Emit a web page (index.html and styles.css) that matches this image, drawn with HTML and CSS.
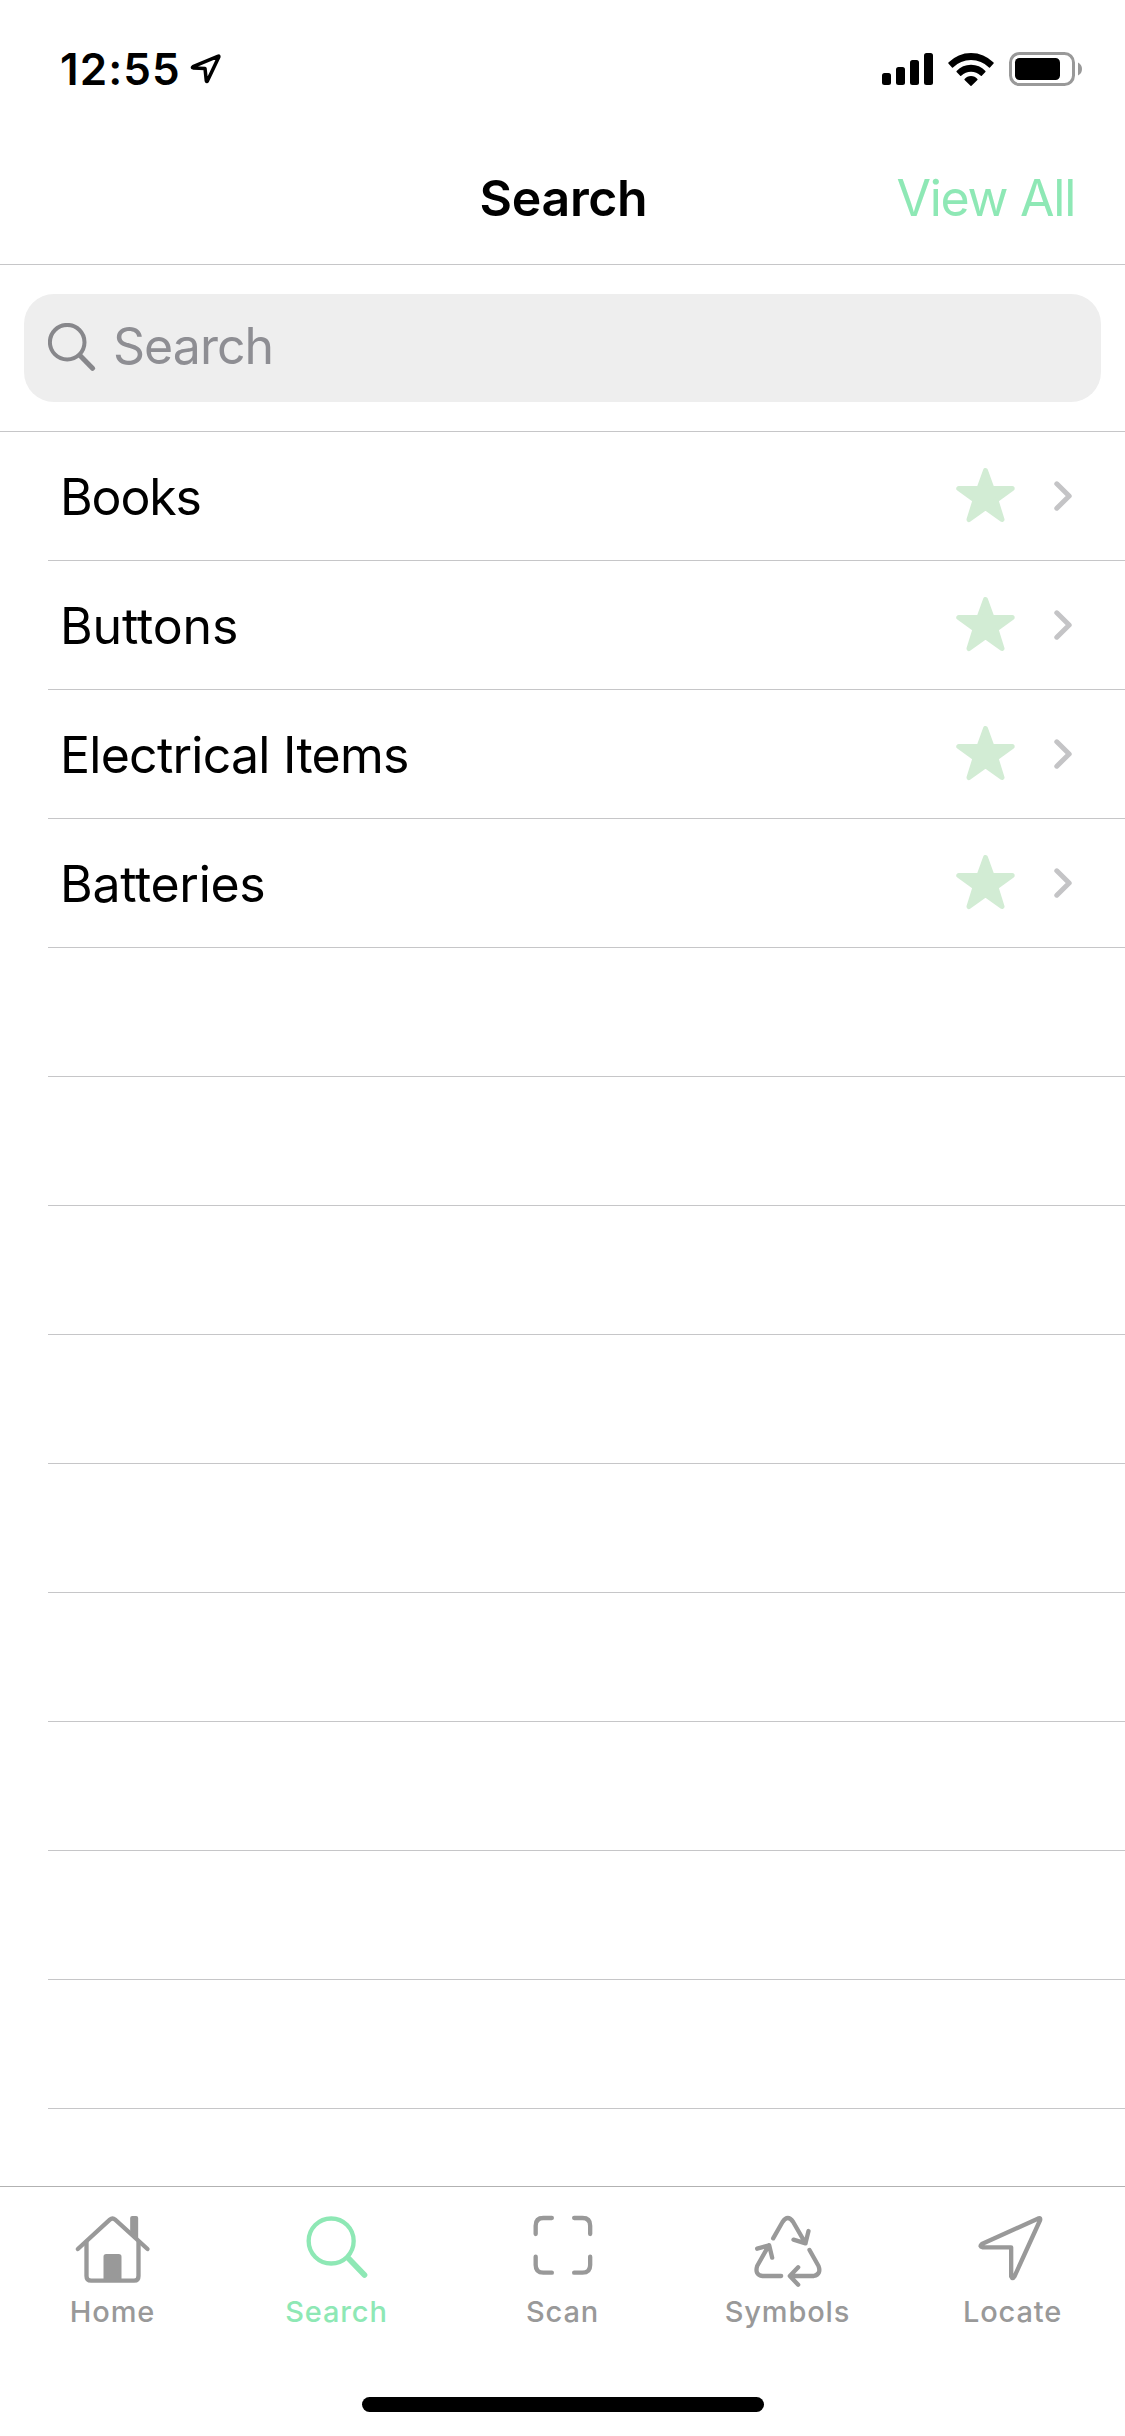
FILE: index.html
```
<!DOCTYPE html>
<html lang="en">
<head>
<meta charset="utf-8">
<title>Search</title>
<link rel="stylesheet" href="styles.css">
</head>
<body>
<div class="screen">
  <div class="status">
    <span class="time">12:55</span>
    <svg class="location" viewBox="0 0 34 34"><path d="M29.3 4.2 4 14.7q-1.300.8.2 1.200L16 16.400 17.300 28.700q.4 1.500 1.200.1L29.800 5q.3-1.200-.5-.8Z"/></svg>
    <svg class="signal" viewBox="0 0 51 32"><rect x="0" y="20" width="9" height="12" rx="2.500"/><rect x="14" y="14" width="9" height="18" rx="2.500"/><rect x="28" y="7" width="9" height="25" rx="2.500"/><rect x="42" y="0" width="9" height="32" rx="2.500"/></svg>
    <svg class="wifi" viewBox="0 0 46 33"><path d="M.4 9.600Q10 0 23 0T45.600 9.600q.4.500 0 1L42 14.500q-.5.500-1 0Q33.500 7 23 7T5 14.500q-.5.500-1 0L.4 10.600q-.4-.5 0-1Z"/><path d="M8.600 18Q14.500 11.800 23 11.800T37.400 18q.4.500 0 1l-3.600 3.700q-.5.500-1 0Q28.500 18.800 23 18.800t-9.800 3.900q-.5.500-1 0L8.600 19q-.4-.5 0-1Z"/><path d="M16.600 26Q19 23 23 23t6.400 3q.4.500 0 1l-5.900 5.700q-.5.500-1 0L16.600 27q-.4-.5 0-1Z"/></svg>
    <svg class="battery" viewBox="0 0 74 34"><rect class="shell" x="1.500" y="1.500" width="63" height="31" rx="9"/><rect x="6" y="6" width="45" height="22" rx="4.500"/><path class="cap" d="M69 10.500q4 2 4 6.500t-4 6.500Z"/></svg>
  </div>

  <header class="nav">
    <h1 class="title">Search</h1>
    <a class="view-all">View All</a>
  </header>

  <div class="search">
    <div class="field">
      <svg class="glass" viewBox="0 0 48 48"><circle cx="19.200" cy="19.200" r="17.300"/><path d="m32.500 33 12 12.300"/></svg>
      <span class="placeholder">Search</span>
    </div>
  </div>

  <svg class="defs">
    <symbol id="star" viewBox="0 0 60 56"><path d="M30.500 2.500 37 20.500H57.200L41 32.200 47 51.500 30.500 39.800 14 51.500 20 32.200 3.800 20.500H24Z"/></symbol>
    <symbol id="chevron" viewBox="0 0 18 30"><path d="M2.800 2.800 15.200 15 2.800 27.200"/></symbol>
  </svg>

  <ul class="list">
    <li class="row"><span class="name books">Books</span><svg class="star"><use href="#star"/></svg><svg class="chevron"><use href="#chevron"/></svg></li>
    <li class="row"><span class="name buttons">Buttons</span><svg class="star"><use href="#star"/></svg><svg class="chevron"><use href="#chevron"/></svg></li>
    <li class="row"><span class="name electrical">Electrical Items</span><svg class="star"><use href="#star"/></svg><svg class="chevron"><use href="#chevron"/></svg></li>
    <li class="row"><span class="name batteries">Batteries</span><svg class="star"><use href="#star"/></svg><svg class="chevron"><use href="#chevron"/></svg></li>
    <li class="row"></li><li class="row"></li><li class="row"></li>
    <li class="row"></li><li class="row"></li><li class="row"></li>
    <li class="row"></li><li class="row"></li><li class="row"></li>
  </ul>

  <nav class="tabs">
    <a class="tab">
      <svg class="icon" viewBox="37.500 93 300 252"><path d="M82 207 178 119q8-7 16 0l97 88"/><path d="M108 186V288q0 14 14 14H251q13 0 13-14V186"/><path class="solid" d="M159 304V230q0-8 8-8h38q8 0 8 8v74ZM239 158v-44q0-6 6-6h12q6 0 6 6v66Z"/></svg>
      <span>Home</span>
    </a>
    <a class="tab active">
      <svg class="icon" viewBox="712.500 93 300 252"><circle cx="842" cy="183" r="67.500"/><path class="handle" d="m893 234 49 51"/></svg>
      <span class="label-search">Search</span>
    </a>
    <a class="tab">
      <svg class="icon" viewBox="37.500 93 300 252"><path d="M105.500 162V137q0-23 23-23H154M221 114h25q23 0 23 23v25M105.500 230v25q0 23 23 23H154M221 278h25q23 0 23-23V230"/></svg>
      <span>Scan</span>
    </a>
    <a class="tab">
      <svg class="icon" viewBox="712.500 93 300 252"><path d="M818 175 846 126q16-24 32 0l37 64M879 179l36 11 9-37M927 210l27 48q9 24-14 30H869M893 262l-25 26 25 26M842 288H786q-24-3-16-30l35-62M770 206l36-10 9 37"/></svg>
      <span>Symbols</span>
    </a>
    <a class="tab">
      <svg class="icon" viewBox="97.500 93 300 252"><path d="M325 115 154 192q-9 8 3 10H242V289q4 10 10 0L329 120q1-7-4-5Z"/></svg>
      <span>Locate</span>
    </a>
  </nav>
  <div class="home-indicator"></div>
</div>
</body>
</html>
```
FILE: styles.css
```
* { box-sizing: border-box; }
body {
  margin: 0;
  background: #fff;
  color: #000;
  font-family: Inter, "Liberation Sans", sans-serif;
}
svg { display: block; flex: none; }
.screen {
  display: flex;
  flex-direction: column;
  width: 1125px;
  height: 2436px;
  overflow: hidden;
}
.defs { width: 0; height: 0; }

.status {
  display: flex;
  align-items: center;
  height: 132px;
  padding: 6px 42px 0 60px;
}
.time {
  font-size: 44px;
  font-weight: 600;
  letter-spacing: 1.07px;
}
.location {
  width: 34px;
  height: 34px;
  margin: 0 auto 0 8px;
  fill: none;
  stroke: #000;
  stroke-width: 3.5;
  stroke-linejoin: round;
}
.signal { width: 51px; height: 32px; }
.wifi { width: 46px; height: 33px; margin-left: 15px; }
.battery { width: 74px; height: 34px; margin-left: 15px; }
.shell { fill: none; stroke: #999; stroke-width: 3; }
.cap { fill: #999; }

.nav {
  display: grid;
  grid-template-columns: 1fr auto 1fr;
  align-items: center;
  height: 133px;
  padding: 0 50px;
  border-bottom: 1px solid #c6c6c8;
}
.title {
  grid-column: 2;
  margin: 0;
  padding-left: 2px;
  font-size: 50px;
  font-weight: 600;
  letter-spacing: -.33px;
}
.view-all {
  justify-self: end;
  color: #8ee8b5;
  font-size: 50px;
  letter-spacing: -1.25px;
}

.search {
  height: 167px;
  padding: 29px 24px;
  border-bottom: 1px solid #c6c6c8;
}
.field {
  display: flex;
  align-items: center;
  gap: 17px;
  height: 108px;
  padding: 0 24px 4px;
  border-radius: 30px;
  background: #eee;
}
.glass {
  width: 48px;
  height: 48px;
  margin-top: 2px;
  fill: none;
  stroke: #87878b;
  stroke-width: 4;
  stroke-linecap: round;
}
.glass path { stroke-width: 5; }
.placeholder {
  color: #8e8e93;
  font-size: 50px;
  letter-spacing: -.97px;
}

.list {
  flex: 1;
  min-height: 0;
  margin: 0 0 0 48px;
  padding: 0;
  overflow: hidden;
  list-style: none;
}
.row {
  display: flex;
  align-items: center;
  height: 129px;
  padding: 0 53px 0 12px;
  border-bottom: 1px solid #c6c6c8;
}
.name {
  flex: 1;
  padding-top: 2px;
  font-size: 50px;
}
.books { letter-spacing: -1.15px; }
.buttons { letter-spacing: -.13px; }
.electrical { letter-spacing: -.75px; }
.batteries { letter-spacing: -.32px; }
.star {
  width: 60px;
  height: 56px;
  fill: #d2ecd4;
  stroke: #d2ecd4;
  stroke-width: 5;
  stroke-linejoin: round;
}
.chevron {
  width: 18px;
  height: 30px;
  margin-left: 39px;
  fill: none;
  stroke: #c4c4c6;
  stroke-width: 5;
  stroke-linecap: round;
  stroke-linejoin: round;
}

.tabs {
  display: grid;
  grid-template-columns: repeat(5, 1fr);
  height: 211px;
  padding-top: 24px;
  border-top: 1px solid #b2b2b2;
}
.tab {
  display: flex;
  flex-direction: column;
  align-items: center;
  color: #999;
  font-size: 29px;
  font-weight: 500;
  line-height: 34px;
  letter-spacing: .85px;
}
.active { color: #8ee8b5; }
.label-search { margin-right: 2px; }
.icon {
  width: 100px;
  height: 84px;
  fill: none;
  stroke: currentColor;
  stroke-width: 13;
  stroke-linecap: round;
  stroke-linejoin: round;
}
.icon .solid { fill: currentColor; stroke: none; }
.icon .handle { stroke-width: 17; }

.home-indicator {
  width: 402px;
  height: 15px;
  margin: 0 auto 24px;
  border-radius: 8px;
  background: #000;
}
```
